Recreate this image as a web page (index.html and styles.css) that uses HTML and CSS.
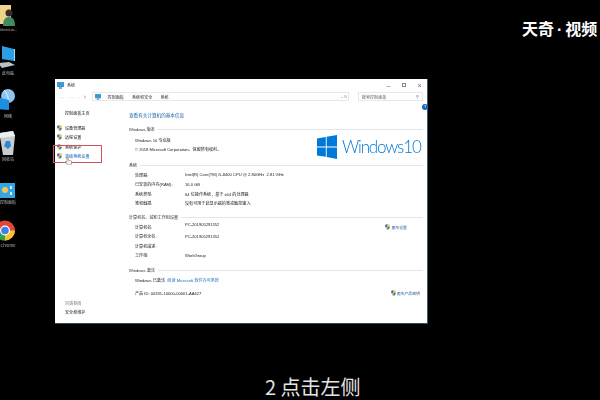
FILE: index.html
```html
<!DOCTYPE html>
<html lang="zh-CN">
<head>
  <meta charset="UTF-8" />
  <title>系统</title>
  <link rel="stylesheet" href="styles.css">
</head>
<body>
  <svg class="defs" width="0" height="0">
    <symbol id="shield" viewBox="0 0 10 12">
      <path d="M5 0C3.6 1 2 1.400 .5 1.500V6H5z" fill="#1f6fc4"/>
      <path d="M5 0C6.400 1 8 1.400 9.500 1.500V6H5z" fill="#f2c230"/>
      <path d="M.5 6C.8 9 2.800 10.800 5 12V6z" fill="#f2c230"/>
      <path d="M9.500 6C9.200 9 7.200 10.800 5 12V6z" fill="#1f6fc4"/>
    </symbol>
  </svg>

  <!-- Desktop icons -->
  <div class="desktop">
    <div class="desk-item">
      <svg width="20" height="26" viewBox="0 0 20 26">
        <path d="M0 5H16V24H0z" fill="#f0d48a"/>
        <circle cx="14" cy="13" r="3.500" fill="#3a2c25"/>
        <path d="M8 26C8 20 10 17 14 17S20 20 20 26z" fill="#3f8a63"/>
      </svg>
      <span class="long">Administr...</span>
    </div>
    <div class="desk-item">
      <svg width="20" height="23" viewBox="0 0 20 23">
        <path d="M7 0L19 3V15L7 13z" fill="#2b9fe6"/>
        <path d="M19 3L20 3V15L19 15z" fill="#a9dcf7"/>
        <path d="M3 17L14 16L20 19L7 22z" fill="#b9c2c9"/>
      </svg>
      <span>此电脑</span>
    </div>
    <div class="desk-item">
      <svg width="20" height="23" viewBox="0 0 20 23">
        <circle cx="13" cy="7" r="7" fill="#8fc4ee"/>
        <path d="M9 1C12 4 14 9 13 14" stroke="#e6f3fc" fill="none"/>
        <path d="M2 8L14 11V21L2 20z" fill="#1e8fe0"/>
      </svg>
      <span>网络</span>
    </div>
    <div class="desk-item">
      <svg width="20" height="25" viewBox="0 0 20 25">
        <path d="M5 3L18 1L20 6L18 25H8L5 7z" fill="#c8cccf"/>
        <path d="M5 3L18 1L20 6L5 8z" fill="#eceeef"/>
        <path d="M11 11L15 11L16 16L13 19L9 16z" fill="#2f86d6"/>
      </svg>
      <span>回收站</span>
    </div>
    <div class="desk-item">
      <svg width="20" height="15" viewBox="0 0 20 15">
        <rect x="5" width="15" height="15" fill="#35a4e6"/>
        <circle cx="10" cy="7" r="3" fill="#f2c84b"/>
        <rect x="15" y="3" width="2" height="3" fill="#d8eefa"/>
        <rect x="15" y="9" width="2" height="3" fill="#d8eefa"/>
      </svg>
      <span>控制面板</span>
    </div>
    <div class="desk-item">
      <svg width="20" height="21" viewBox="0 0 20 21">
        <circle cx="10" cy="10.500" r="10" fill="#e3453a"/>
        <path d="M10 10.500L1.300 15.500A10 10 0 0 0 10 20.500z" fill="#2ea44f"/>
        <path d="M10 10.500H20A10 10 0 0 1 10 20.500z" fill="#f6c52c"/>
        <circle cx="10" cy="10.500" r="5" fill="#fff"/>
        <circle cx="10" cy="10.500" r="3.800" fill="#3b83e6"/>
      </svg>
      <span>Chrome</span>
    </div>
  </div>

  <!-- System window -->
  <div class="window">
    <div class="titlebar">
      <svg width="7" height="7" viewBox="0 0 7 7"><rect width="7" height="5" fill="#3a9ad9"/><rect x="2" y="5" width="3" height="2" fill="#8aa4b5"/></svg>
      <span class="title-text">系统</span>
      <div class="win-btns">
        <span>&#8211;</span>
        <span class="max-btn"></span>
        <span>&#215;</span>
      </div>
    </div>

    <div class="navbar">
      <span class="nav-arrow dim">&#8592;</span>
      <span class="nav-arrow dim">&#8594;</span>
      <span class="nav-arrow dim small">&#8964;</span>
      <span class="nav-arrow">&#8593;</span>
      <div class="address">
        <svg width="6" height="6" viewBox="0 0 7 7"><rect width="7" height="5" fill="#3a9ad9"/><rect x="2" y="5" width="3" height="2" fill="#8aa4b5"/></svg>
        <span class="crumb">控制面板</span>
        <span class="crumb">系统和安全</span>
        <span class="crumb">系统</span>
        <span class="addr-end">&#8964; &#8635;</span>
      </div>
      <div class="search">
        <span>搜索控制面板</span>
        <span>&#9906;</span>
      </div>
    </div>

    <div class="content">
      <div class="sidebar">
        <div class="side-home">控制面板主页</div>
        <div class="side-link"><svg class="shield"><use href="#shield"/></svg>设备管理器</div>
        <div class="side-link"><svg class="shield"><use href="#shield"/></svg>远程设置</div>
        <div class="side-link"><svg class="shield"><use href="#shield"/></svg>系统保护</div>
        <div class="side-link active"><svg class="shield"><use href="#shield"/></svg>高级系统设置</div>
        <div class="side-foot">
          <div class="side-see">另请参阅</div>
          <div>安全和维护</div>
        </div>
      </div>

      <div class="main">
        <div class="help">?</div>
        <h1>查看有关计算机的基本信息</h1>

        <div class="section-head">Windows 版本</div>
        <div class="edition">
          <div class="edition-text">
            <div class="row">Windows 10 专业版</div>
            <div class="row">© 2018 Microsoft Corporation。保留所有权利。</div>
          </div>
          <div class="logo">
            <svg width="20" height="24" viewBox="0 0 20 24">
              <path d="M0 3.500L8.800 2V11.400H0z" fill="#0078d7"/>
              <path d="M9.700 1.800L20 0V11.400H9.700z" fill="#0078d7"/>
              <path d="M0 12.400H8.800V21.800L0 20.400z" fill="#0078d7"/>
              <path d="M9.700 12.400H20V24L9.700 22z" fill="#0078d7"/>
            </svg>
            <span class="logo-text">Windows 10</span>
          </div>
        </div>

        <div class="section-head">系统</div>
        <div class="row"><span class="key">处理器:</span>Intel(R) Core(TM) i5-8400 CPU @ 2.80GHz&nbsp;&nbsp;2.81 GHz</div>
        <div class="row"><span class="key">已安装的内存(RAM):</span>16.0 GB</div>
        <div class="row"><span class="key">系统类型:</span>64 位操作系统，基于 x64 的处理器</div>
        <div class="row"><span class="key">笔和触摸:</span>没有可用于此显示器的笔或触控输入</div>

        <div class="section-head spaced">计算机名、域和工作组设置</div>
        <div class="row has-action"><span class="key">计算机名:</span>PC-201905291352
          <span class="action first"><svg class="shield"><use href="#shield"/></svg>更改设置</span>
        </div>
        <div class="row"><span class="key">计算机全名:</span>PC-201905291352</div>
        <div class="row"><span class="key">计算机描述:</span></div>
        <div class="row"><span class="key">工作组:</span>WorkGroup</div>

        <div class="section-head spaced last">Windows 激活</div>
        <div class="row">Windows 已激活 &nbsp;<span class="link">阅读 Microsoft 软件许可条款</span></div>
        <div class="row has-action product"><span>产品 ID: 00331-10000-00001-AA627</span>
          <span class="action"><svg class="shield"><use href="#shield"/></svg>更改产品密钥</span>
        </div>
      </div>
    </div>
  </div>

  <!-- Things drawn over the window by the video -->
  <div class="red-box"></div>
  <svg class="cursor" width="7" height="9" viewBox="0 0 7 9">
    <path d="M2 0H3V4L6.500 5V8L5.500 9H2.500L.5 5.500L2 5.500z" fill="#f4f4f4" stroke="#777" stroke-width=".6"/>
  </svg>
  <div class="brand">天奇<i>·</i>视频</div>
  <div class="caption">2 点击左侧</div>
</body>
</html>
```

FILE: styles.css
```css
* {
  box-sizing: border-box;
}

body {
  margin: 0;
  width: 600px;
  height: 400px;
  position: relative;
  overflow: hidden;
  background: #000;
  font-family: "Noto Sans CJK SC", "Liberation Sans", sans-serif;
}

.defs {
  position: absolute;
}

/* desktop */
.desktop {
  position: absolute;
  left: -5px;
  top: -8px;
  width: 30px;
  display: flex;
  flex-direction: column;
  filter: blur(.3px);
}

.desk-item {
  height: 43px;
  display: flex;
  flex-direction: column;
  justify-content: flex-end;
  align-items: flex-start;
  padding-bottom: 1px;
  color: #b4b4b4;
  font-size: 4px;
  line-height: 8px;
}

.desk-item span {
  width: 26px;
  text-align: center;
  white-space: nowrap;
}

.desk-item .long {
  font-size: 3.400px;
}

/* window */
.window {
  position: absolute;
  left: 55px;
  top: 79px;
  width: 373px;
  height: 245px;
  background: #fff;
  border-right: 1px solid #3c5a6c;
  border-bottom: 1px solid #2c4a5c;
  color: #1c1c1c;
  font-family: "Liberation Sans", "Noto Sans CJK SC", sans-serif;
  font-size: 4.100px;
  display: flex;
  flex-direction: column;
  filter: blur(.3px);
}

.titlebar {
  height: 12px;
  display: flex;
  align-items: center;
  gap: 3px;
  padding: 0 0 0 2px;
}

.title-text {
  color: #333;
}

.win-btns {
  margin-left: auto;
  display: flex;
  align-items: center;
  color: #666;
  font-size: 7px;
}

.win-btns span {
  width: 15px;
  text-align: center;
}

.win-btns .max-btn {
  width: 4px;
  height: 4px;
  margin: 0 6px;
  border: 1px solid #888;
}

.navbar {
  height: 11px;
  display: flex;
  align-items: center;
  padding: 0 4px 0 3px;
}

.nav-arrow {
  width: 9px;
  font-size: 6px;
  color: #555;
  text-align: center;
}

.nav-arrow.dim {
  color: #c4c4c4;
}

.nav-arrow.small {
  width: 5px;
  font-size: 4px;
}

.address {
  width: 261px;
  height: 9px;
  margin-left: 2px;
  border: 1px solid #e8e8e8;
  display: flex;
  align-items: center;
  gap: 8px;
  padding-left: 2px;
  color: #333;
}

.address svg {
  margin-right: -1px;
}

.addr-end {
  margin-left: auto;
  padding-right: 1px;
  color: #888;
}

.search {
  width: 66px;
  height: 9px;
  margin-left: 9px;
  border: 1px solid #e8e8e8;
  display: flex;
  align-items: center;
  justify-content: space-between;
  padding: 0 3px;
  color: #666;
}

.content {
  flex: 1;
  display: flex;
}

/* left column */
.sidebar {
  width: 74px;
  padding: 7px 0 8px 10px;
  display: flex;
  flex-direction: column;
  color: #1c1c1c;
}

.side-home {
  height: 9px;
  margin-bottom: 5px;
  line-height: 9px;
}

.side-link {
  height: 9.500px;
  display: flex;
  align-items: center;
  position: relative;
}

.shield {
  width: 5px;
  height: 6px;
  flex: none;
}

.side-link .shield {
  position: absolute;
  left: -8px;
}

.side-link.active {
  color: #0a5fb0;
}

.side-foot {
  margin-top: auto;
  display: flex;
  flex-direction: column;
  gap: 3px;
}

.side-see {
  color: #777;
}

/* right column */
.main {
  flex: 1;
  padding: 9px 4px 0 0;
  position: relative;
}

.help {
  position: absolute;
  right: -1px;
  top: 2px;
  width: 6px;
  height: 6px;
  border-radius: 50%;
  background: #1668b8;
  color: #fff;
  font-size: 4px;
  line-height: 6px;
  text-align: center;
}

h1 {
  margin: 0 0 4px;
  height: 9px;
  font-size: 4.600px;
  line-height: 9px;
  font-weight: normal;
  color: #1a5ea8;
}

.section-head {
  height: 10px;
  display: flex;
  align-items: center;
  gap: 3px;
  color: #333;
}

.section-head.spaced {
  margin-top: 4px;
}

.section-head.last {
  margin-top: 5px;
}

.section-head::after {
  content: "";
  flex: 1;
  height: 1px;
  background: #e6e6e6;
}

.row {
  height: 9.500px;
  padding-left: 6px;
  display: flex;
  align-items: center;
  white-space: pre;
  position: relative;
}

.key {
  width: 50px;
}

.edition {
  height: 26px;
  display: flex;
  padding-top: 1px;
}

.edition-text {
  flex: 1;
}

.logo {
  width: 106px;
  flex: none;
  margin-top: -1px;
  display: flex;
  align-items: center;
  gap: 5px;
  height: 26px;
}

.logo svg {
  flex: none;
}

.logo-text {
  font-family: Lato, "Liberation Sans", sans-serif;
  font-weight: 300;
  font-size: 17px;
  line-height: 24px;
  letter-spacing: -1.200px;
  word-spacing: -3px;
  color: #0078d7;
  white-space: nowrap;
}

.link {
  color: #1a6fc0;
}

.has-action .action {
  position: absolute;
  display: flex;
  align-items: center;
  gap: 1px;
  color: #1a5ea8;
  font-size: 3.900px;
  right: 3px;
}

.has-action .action.first {
  right: 16px;
}

.product {
  height: 12px;
  margin-top: 2px;
}

/* overlays from the video */
.red-box {
  position: absolute;
  left: 53px;
  top: 145px;
  width: 49px;
  height: 18px;
  border: 1.500px solid #d2505a;
}

.cursor {
  position: absolute;
  left: 65px;
  top: 156px;
}

.brand {
  position: absolute;
  left: 522px;
  top: 14px;
  color: #fff;
  font-size: 16px;
  line-height: 28px;
  font-weight: 700;
  white-space: nowrap;
}

.brand i {
  font-style: normal;
  font-family: "Liberation Sans", sans-serif;
  margin: 0 3px;
}

.caption {
  position: absolute;
  left: 265px;
  top: 372px;
  color: #e4e4e4;
  font-size: 20px;
  line-height: 30px;
  white-space: nowrap;
}
```
